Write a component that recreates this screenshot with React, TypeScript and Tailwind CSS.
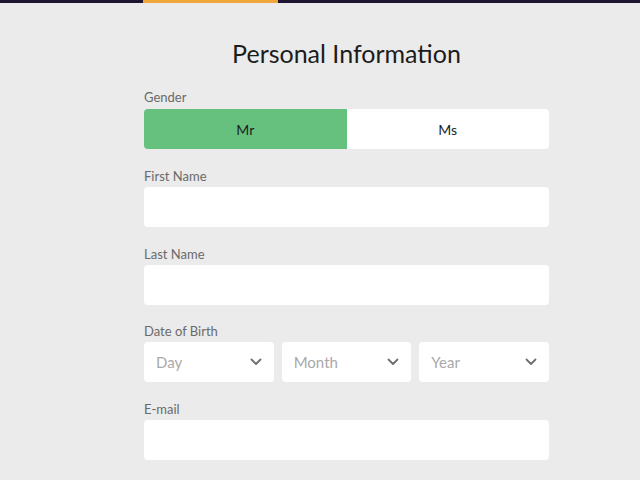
import React from "react";

function Chevron() {
  return (
    <svg width="12" height="8" viewBox="0 0 12 8" fill="none" className="text-[#6f6f6f]">
      <path d="M1.5 1.5 L6 6 L10.5 1.5" stroke="currentColor" strokeWidth="1.8" strokeLinecap="round" strokeLinejoin="round" />
    </svg>
  );
}

function Field({ label, children }: { label: string; children: React.ReactNode }) {
  return (
    <div className="flex flex-col">
      <div className="text-[13px] leading-4 text-[#6a6a6a] mb-[3px]">{label}</div>
      {children}
    </div>
  );
}

function Select({ placeholder }: { placeholder: string }) {
  return (
    <div className="flex-1 h-10 bg-white rounded-[4px] flex items-center justify-between pl-3 pr-3">
      <span className="text-[15px] text-[#a9a9a9]">{placeholder}</span>
      <Chevron />
    </div>
  );
}

export default function App() {
  return (
    <div className="min-h-[480px] bg-[#ebebeb]" style={{ fontFamily: "Lato, 'Noto Sans', sans-serif" }}>
      <div className="h-[3px] bg-[#1f1530] flex">
        <div className="ml-[143px] w-[135px] bg-[#efa63a]" />
      </div>
      <div className="w-[405px] ml-[144px] flex flex-col">
        <h1 className="mt-[34px] text-center text-[25px] leading-8 text-[#1c1c1c]">Personal Information</h1>
        <div className="mt-[20px]">
          <Field label="Gender">
            <div className="flex h-10 rounded-[4px] overflow-hidden mt-[1px]">
              <div className="flex-1 bg-[#66c17f] flex items-center justify-center text-[14px] text-[#1d1d1d]">Mr</div>
              <div className="flex-1 bg-white flex items-center justify-center text-[14px] text-[#1d1d1d]">Ms</div>
            </div>
          </Field>
        </div>
        <div className="mt-[19px] flex flex-col gap-[18.5px]">
          <Field label="First Name">
            <div className="h-10 bg-white rounded-[4px]" />
          </Field>
          <Field label="Last Name">
            <div className="h-10 bg-white rounded-[4px]" />
          </Field>
          <Field label="Date of Birth">
            <div className="flex gap-2">
              <Select placeholder="Day" />
              <Select placeholder="Month" />
              <Select placeholder="Year" />
            </div>
          </Field>
          <Field label="E-mail">
            <div className="h-10 bg-white rounded-[4px]" />
          </Field>
        </div>
      </div>
    </div>
  );
}
